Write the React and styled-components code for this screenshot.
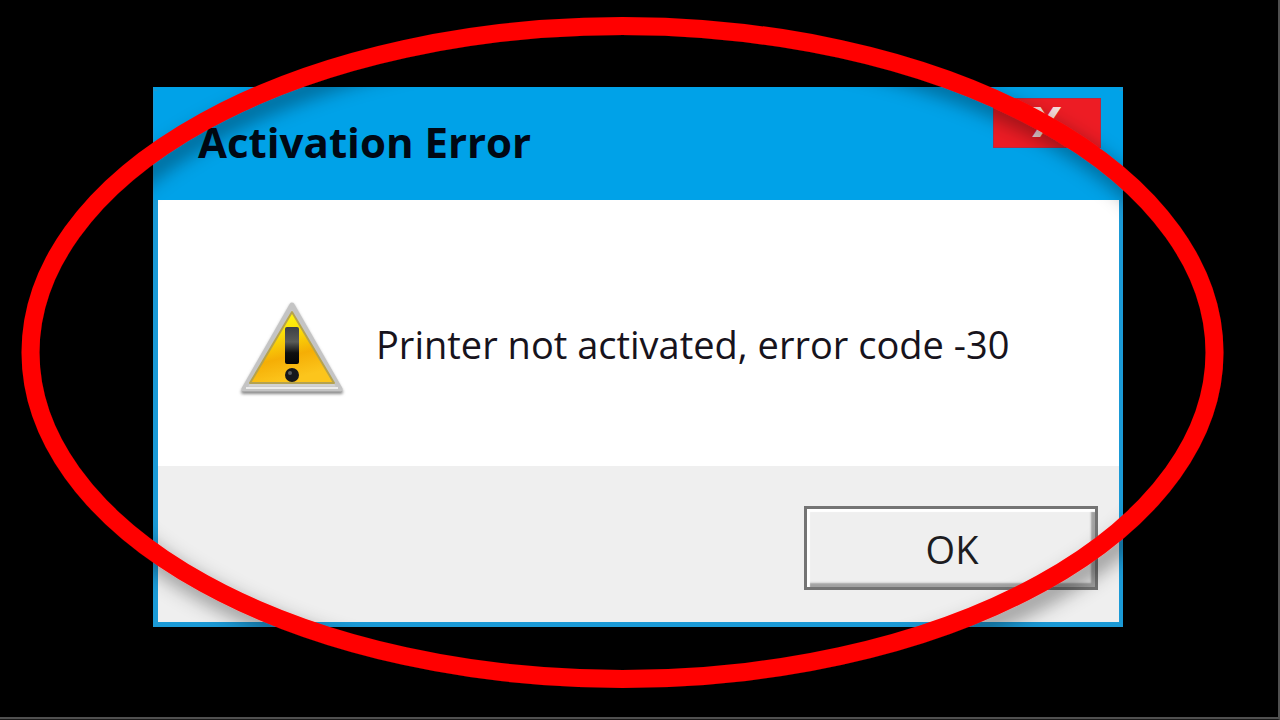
import { useState } from 'react';
import styled, { createGlobalStyle } from 'styled-components';

export default function App() {
  const [aberto, setAberto] = useState(true);

  function fechar() {
    setAberto(false);
  }

  return (
    <>
      <GlobalStyle />
      <Stage>
        {aberto && (
          <Dialog role="alertdialog" aria-labelledby="titulo" aria-describedby="mensagem">
            <Header>
              <Title id="titulo">Activation Error</Title>
              <CloseButton type="button" aria-label="X" onClick={fechar}>X</CloseButton>
            </Header>
            <Body>
              <WarningIcon />
              <Message id="mensagem">Printer not activated, error code -30</Message>
            </Body>
            <Footer>
              <OkButton type="button" onClick={fechar}>OK</OkButton>
            </Footer>
          </Dialog>
        )}
        <Highlight />
      </Stage>
    </>
  );
}

function WarningIcon() {
  return (
    <Icon viewBox="0 0 108 100" aria-hidden="true">
      <defs>
        <linearGradient id="yellow" x1="0" y1="0" x2="0.3" y2="1">
          <stop offset="0" stopColor="#ffff16" />
          <stop offset="0.35" stopColor="#fce40a" />
          <stop offset="0.7" stopColor="#f5ae05" />
          <stop offset="1" stopColor="#fcc51c" />
        </linearGradient>
        <linearGradient id="mark" x1="0" y1="0" x2="0" y2="1">
          <stop offset="0" stopColor="#3d4046" />
          <stop offset="0.4" stopColor="#5a5c58" />
          <stop offset="0.7" stopColor="#101010" />
          <stop offset="1" stopColor="#050505" />
        </linearGradient>
        <filter id="soft" x="-20%" y="-20%" width="140%" height="140%">
          <feGaussianBlur stdDeviation="1.5" />
        </filter>
      </defs>
      <path d="M54 7 L103 93 H5 Z" fill="#8a8a8a" stroke="#8a8a8a" strokeWidth="4" strokeLinejoin="round" filter="url(#soft)" />
      <path d="M54 6 L102 90 H6 Z" fill="#d2d2d2" stroke="#c4c4c4" strokeWidth="5" strokeLinejoin="round" />
      <path d="M8 89 H100" stroke="#ececec" strokeWidth="2" />
      <path d="M54 13 L96 84 H12 Z" fill="url(#yellow)" stroke="#b5a24e" strokeWidth="2" strokeLinejoin="round" />
      <rect x="47" y="28" width="14" height="37" rx="2" fill="url(#mark)" />
      <circle cx="54" cy="76" r="7" fill="#15171c" />
      <circle cx="52" cy="74" r="2" fill="#565b60" />
    </Icon>
  );
}

function Highlight() {
  return (
    <Overlay viewBox="0 0 1280 720" preserveAspectRatio="none" aria-hidden="true">
      <defs>
        <filter id="shadow" x="-5%" y="-5%" width="110%" height="115%">
          <feDropShadow dx="6" dy="10" stdDeviation="10" floodColor="#000" floodOpacity="0.42" />
        </filter>
      </defs>
      <ellipse cx="622.5" cy="352.5" rx="592" ry="326.5" fill="none" stroke="#ff0000" strokeWidth="18" filter="url(#shadow)" />
    </Overlay>
  );
}

const GlobalStyle = createGlobalStyle`
  * {
    box-sizing: border-box;
  }

  body {
    margin: 0;
    background-color: #000000;
  }
`;

const Stage = styled.main`
  position: relative;
  display: flex;
  min-height: 100vh;
  padding: 87px 155px 92px 153px;
  background-color: #000000;
  border-right: 2px solid #505050;
  border-bottom: 1px solid #181818;
  box-shadow: inset 0 -2px 0 #505050;
`;

const Dialog = styled.section`
  flex: 1;
  display: flex;
  flex-direction: column;
  background-color: #ffffff;
  border: 4px solid #1b9ad6;
  border-left-width: 5px;
  border-bottom-width: 5px;
  border-top-color: #00a2e8;
`;

const Header = styled.header`
  display: flex;
  justify-content: space-between;
  align-items: flex-start;
  height: 109px;
  padding: 7px 18px 0 40px;
  background-color: #00a2e8;
  box-shadow: -4px 0 0 #00a2e8, 4px 0 0 #00a2e8;
`;

const Title = styled.h1`
  margin: 16px 0 0;
  font-family: "Open Sans", sans-serif;
  font-size: 42px;
  line-height: 56px;
  font-weight: 700;
  color: #000814;
`;

const CloseButton = styled.button`
  width: 108px;
  height: 50px;
  padding: 0;
  border: 1px solid #b52a44;
  background-color: #ed1c24;
  color: #f8dcdc;
  font-family: "DejaVu Sans", sans-serif;
  font-size: 40px;
  line-height: 48px;
  font-weight: 700;
`;

const Body = styled.div`
  flex: 1;
  display: flex;
  align-items: center;
  gap: 30px;
  padding: 0 24px 0 80px;
  background-color: #ffffff;
`;

const Icon = styled.svg`
  flex: none;
  width: 108px;
  height: 100px;
  margin-top: 32px;
`;

const Message = styled.p`
  margin: 22px 0 0;
  font-family: "Open Sans", sans-serif;
  font-size: 38px;
  line-height: 56px;
  font-weight: 400;
  color: #17131c;
`;

const Footer = styled.footer`
  display: flex;
  justify-content: flex-end;
  align-items: flex-start;
  height: 156px;
  padding: 40px 21px 0;
  background-color: #efefef;
`;

const OkButton = styled.button`
  width: 294px;
  height: 84px;
  padding: 2px 0 0 2px;
  border: 3px solid #747474;
  background-color: #efefef;
  box-shadow: inset 3px 3px 1px #ffffff, inset -4px -4px 2px #a2a2a2;
  color: #1c1c1f;
  font-family: "Open Sans", sans-serif;
  font-size: 38px;
  line-height: 56px;
`;

const Overlay = styled.svg`
  position: absolute;
  top: 0;
  left: 0;
  width: 100vw;
  height: 100vh;
  pointer-events: none;
`;
